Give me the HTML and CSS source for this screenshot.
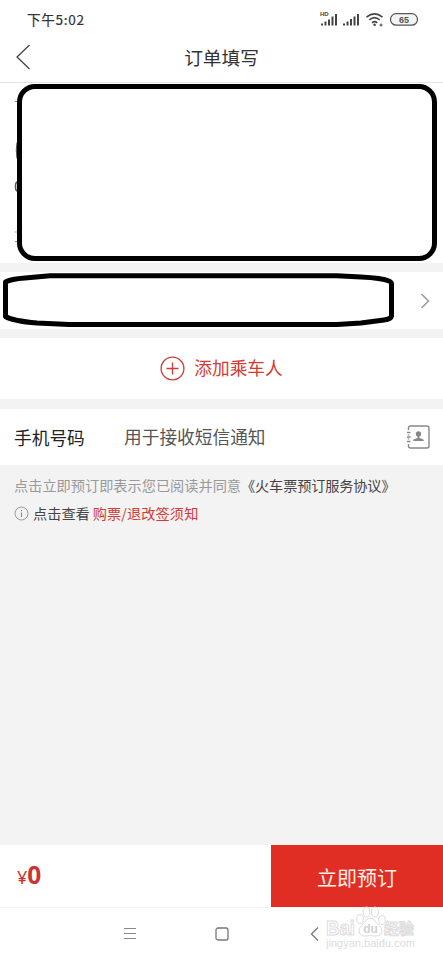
FILE: index.html
```html
<!DOCTYPE html>
<html lang="zh-CN">
<head>
<meta charset="utf-8">
<title>订单填写</title>
<link rel="stylesheet" href="styles.css">
</head>
<body>
<div class="screen">
  <div class="status">
    <span class="time">下午5:02</span>
    <svg class="status-icons" width="102" height="18" viewBox="0 0 102 18">
      <text class="hd" x="1" y="6">HD</text>
      <g stroke="#444" stroke-width="2">
        <path d="M3 15.500v-2M6.500 15.500v-4M10 15.500v-6M13.500 15.500v-9M17 15.500V4"/>
        <path d="M25 15.500v-2M28.500 15.500v-4M32 15.500v-6.500M35.500 15.500V6.500M39 15.500V4"/>
      </g>
      <g fill="none" stroke="#444" stroke-width="1.600">
        <path d="M47.500 7.200q8-6.500 16 0M50.300 10q5.200-4.600 10.500 0M53 12.800q2.600-2.300 5.200 0"/>
        <circle cx="62" cy="15" r="1" stroke-width="1"/>
      </g>
      <circle cx="55.600" cy="14.700" r="1.300" fill="#444"/>
      <rect x="71.500" y="3.700" width="27" height="11.500" rx="5.700" fill="#f4f4f4" stroke="#555" stroke-width="1.200"/>
      <text class="battery" x="85" y="12.700" text-anchor="middle">65</text>
    </svg>
  </div>
  <header class="header">
    <svg class="back" width="16" height="28" viewBox="0 0 16 28"><path d="M14.500 2L2 14l12.500 12" fill="none" stroke="#444" stroke-width="1.300"/></svg>
    <h1>订单填写</h1>
  </header>
  <section class="trip">
    <svg class="marks" width="4" height="150" viewBox="0 0 4 150">
      <path d="M2 4.500h2M3 134v2M2 144.500h2" stroke="#999" stroke-width="1"/>
      <path d="M4 45.500q-1.500 8 0 16" fill="#333" stroke="#555"/>
      <path d="M4.500 85q-2 0-2 4.500t2 4.500" fill="none" stroke="#555" stroke-width="1.500"/>
    </svg>
    <div class="trip-box"></div>
  </section>
  <section class="seat">
    <svg width="392" height="55" viewBox="0 0 392 55"><path d="M2.500 9Q8 6 22 5L47 2.800H334L358 4Q379 5 386 8Q388.500 9 388.500 11V43Q388 46 381 47L358 50L334 51.500H66L34 50Q10 48 2.500 43.500Z" fill="#fff" stroke="#000" stroke-width="5" stroke-linejoin="round"/></svg>
    <svg class="next" width="10" height="16" viewBox="0 0 10 16"><path d="M1.500 1L8.500 8l-7 7" fill="none" stroke="#999" stroke-width="1.500"/></svg>
  </section>
  <section class="add">
    <svg width="26" height="26" viewBox="0 0 26 26"><g fill="none" stroke="#d13a35" stroke-width="1.300"><circle cx="12.500" cy="12.500" r="11.400"/><path d="M6.500 12.500h12M12.500 6.500v12"/></g></svg>
    <span>添加乘车人</span>
  </section>
  <section class="phone">
    <span class="label">手机号码</span>
    <span class="hint">用于接收短信通知</span>
    <svg class="contact" width="26" height="26" viewBox="0 0 26 26">
      <path d="M3.500 6V4q0-2 2-2H22q2 0 2 2V22q0 2-2 2H5.500q-2 0-2-2v-2M3.500 10.500v1M3.500 14.500v1M2 8.500h3.500M2 13h3.500M2 17.500h3.500" fill="none" stroke="#888" stroke-width="1.400"/>
      <circle cx="13.500" cy="10" r="2.700" fill="#888"/><path d="M12.600 11h1.800v3l3.600 1.300q1 .5.800 1.700H8.200q-.2-1.200.8-1.700l3.600-1.300z" fill="#888"/>
    </svg>
  </section>
  <main class="notes">
    <p class="agree">点击立即预订即表示您已阅读并同意<span class="terms">《火车票预订服务协议》</span></p>
    <p class="info">
      <svg width="15" height="15" viewBox="0 0 15 15"><circle cx="7.500" cy="7.500" r="6.500" fill="none" stroke="#999"/><path d="M7.500 6.500V11M7.500 4v1.300" stroke="#888" stroke-width="1.100"/></svg>
      <span>点击查看</span><span class="rules">购票/退改签须知</span>
    </p>
  </main>
  <footer class="bar">
    <div class="price"><span class="yen">¥</span><b>0</b></div>
    <div class="submit">立即预订</div>
  </footer>
  <nav class="nav">
    <svg width="14" height="14" viewBox="0 0 14 14"><path d="M1 1.500h12M1 6.500h12M1 11.500h12" stroke="#888" stroke-width="1.200"/></svg>
    <svg width="14" height="14" viewBox="0 0 14 14"><rect x="1" y="1" width="12" height="12" rx="2" fill="none" stroke="#777" stroke-width="1.300"/></svg>
    <svg width="14" height="14" viewBox="0 0 14 14"><path d="M11 .5L4.500 7l6.500 6.500" fill="none" stroke="#777" stroke-width="1.300"/></svg>
  </nav>
  <svg class="watermark" width="96" height="54" viewBox="0 0 96 54">
    <g fill="#fff" stroke="#dcdcdc" stroke-width="1">
      <ellipse cx="37" cy="18" rx="3.300" ry="4.500"/><ellipse cx="43.500" cy="11" rx="3.500" ry="5"/><ellipse cx="52" cy="11" rx="3.500" ry="5"/><ellipse cx="59" cy="19" rx="3.300" ry="4.500"/>
      <path d="M47.500 17q4 0 6 5q7 5 5 10q-2 4.500-11 2.500q-9 2-11-2.500t4.500-10q2.500-5 6.500-5z"/>
      <text class="wm-main" x="3" y="34" textLength="29" lengthAdjust="spacingAndGlyphs">Bai</text>
      <text class="wm-cn" x="61" y="33" textLength="30">经验</text>
    </g>
    <text class="wm-du" x="47.500" y="32" text-anchor="middle">du</text>
    <text class="wm-url" x="3" y="46" textLength="89" lengthAdjust="spacingAndGlyphs">jingyan.baidu.com</text>
  </svg>
</div>
</body>
</html>
```
FILE: styles.css
```css
* { box-sizing: border-box; }
body { margin: 0; background: #f3f3f3; font-family: "Noto Sans CJK SC", sans-serif; }
.screen { position: relative; width: 443px; height: 960px; display: flex; flex-direction: column; overflow: hidden; }
h1, p { margin: 0; font-weight: 400; }
svg { display: block; flex: none; }
.status { height: 38px; background: #fff; display: flex; justify-content: space-between; align-items: center; padding: 0 22px 0 27px; }
.time { font-size: 13.6px; color: #333; letter-spacing: .7px; -webkit-text-stroke: .2px #333; }
.hd { font: bold 6px "Liberation Sans", sans-serif; fill: #444; }
.battery { font: bold 9px "Liberation Sans", sans-serif; fill: #555; }
.header { height: 45px; background: #fff; border-bottom: 1px solid #e3e3e3; display: grid; grid-template-columns: 60px 1fr 60px; align-items: center; padding-bottom: 6px; }
.back { margin-left: 15px; }
h1 { text-align: center; font-size: 18.7px; line-height: 28px; color: #333; }
.trip { height: 180px; background: #fff; display: flex; padding: 1px 6px 0 13px; }
.marks { margin-top: 13px; }
.trip-box { flex: 1; height: 177px; border: 5px solid #000; border-radius: 18px; }
.seat { height: 57px; margin-top: 9px; background: #fff; display: flex; align-items: center; justify-content: space-between; padding: 0 13px 0 3px; }
.add { height: 61px; margin-top: 9px; background: #fff; display: flex; justify-content: center; align-items: center; gap: 8px; color: #d13a35; font-size: 17.7px; }
.add span { padding-bottom: 3px; }
.phone { height: 56px; margin-top: 10px; background: #fff; display: flex; align-items: center; padding: 0 12px 0 14px; font-size: 17.7px; }
.label { width: 110px; color: #222; }
.hint { color: #555; padding-bottom: 2px; }
.contact { margin-left: auto; }
.notes { flex: 1; padding: 9px 14px; font-size: 14.2px; }
.agree { line-height: 22px; color: #999; white-space: nowrap; }
.terms { color: #444; letter-spacing: -.15px; }
.info { display: flex; align-items: center; line-height: 22px; margin-top: 6px; color: #444; gap: 4px; }
.rules { color: #d13a35; margin-left: -1px; letter-spacing: .1px; }
.bar { height: 62px; background: #fff; display: flex; }
.price { flex: 1; display: flex; align-items: baseline; padding: 12px 0 0 17px; color: #c93431; font-family: "Noto Sans", sans-serif; line-height: 36px; }
.yen { font-size: 18px; }
.price b { font-size: 24.5px; }
.submit { width: 172px; background: #e02e24; color: #fff0e8; font-size: 20px; line-height: 65px; height: 62px; text-align: center; }
.nav { height: 53px; background: #fff; border-top: 1px solid #f5f5f5; display: flex; justify-content: space-between; align-items: center; padding: 0 122px 0 123px; }
.watermark { position: absolute; left: 323px; top: 901px; }
.wm-main { font: bold 20px "Liberation Sans", sans-serif; }
.wm-cn { font: bold 15px "Noto Sans CJK SC", sans-serif; }
.wm-du { font: bold 12px "Liberation Sans", sans-serif; fill: #d2d2d2; }
.wm-url { font: 10px "Liberation Sans", sans-serif; fill: #dcdcdc; }
```
